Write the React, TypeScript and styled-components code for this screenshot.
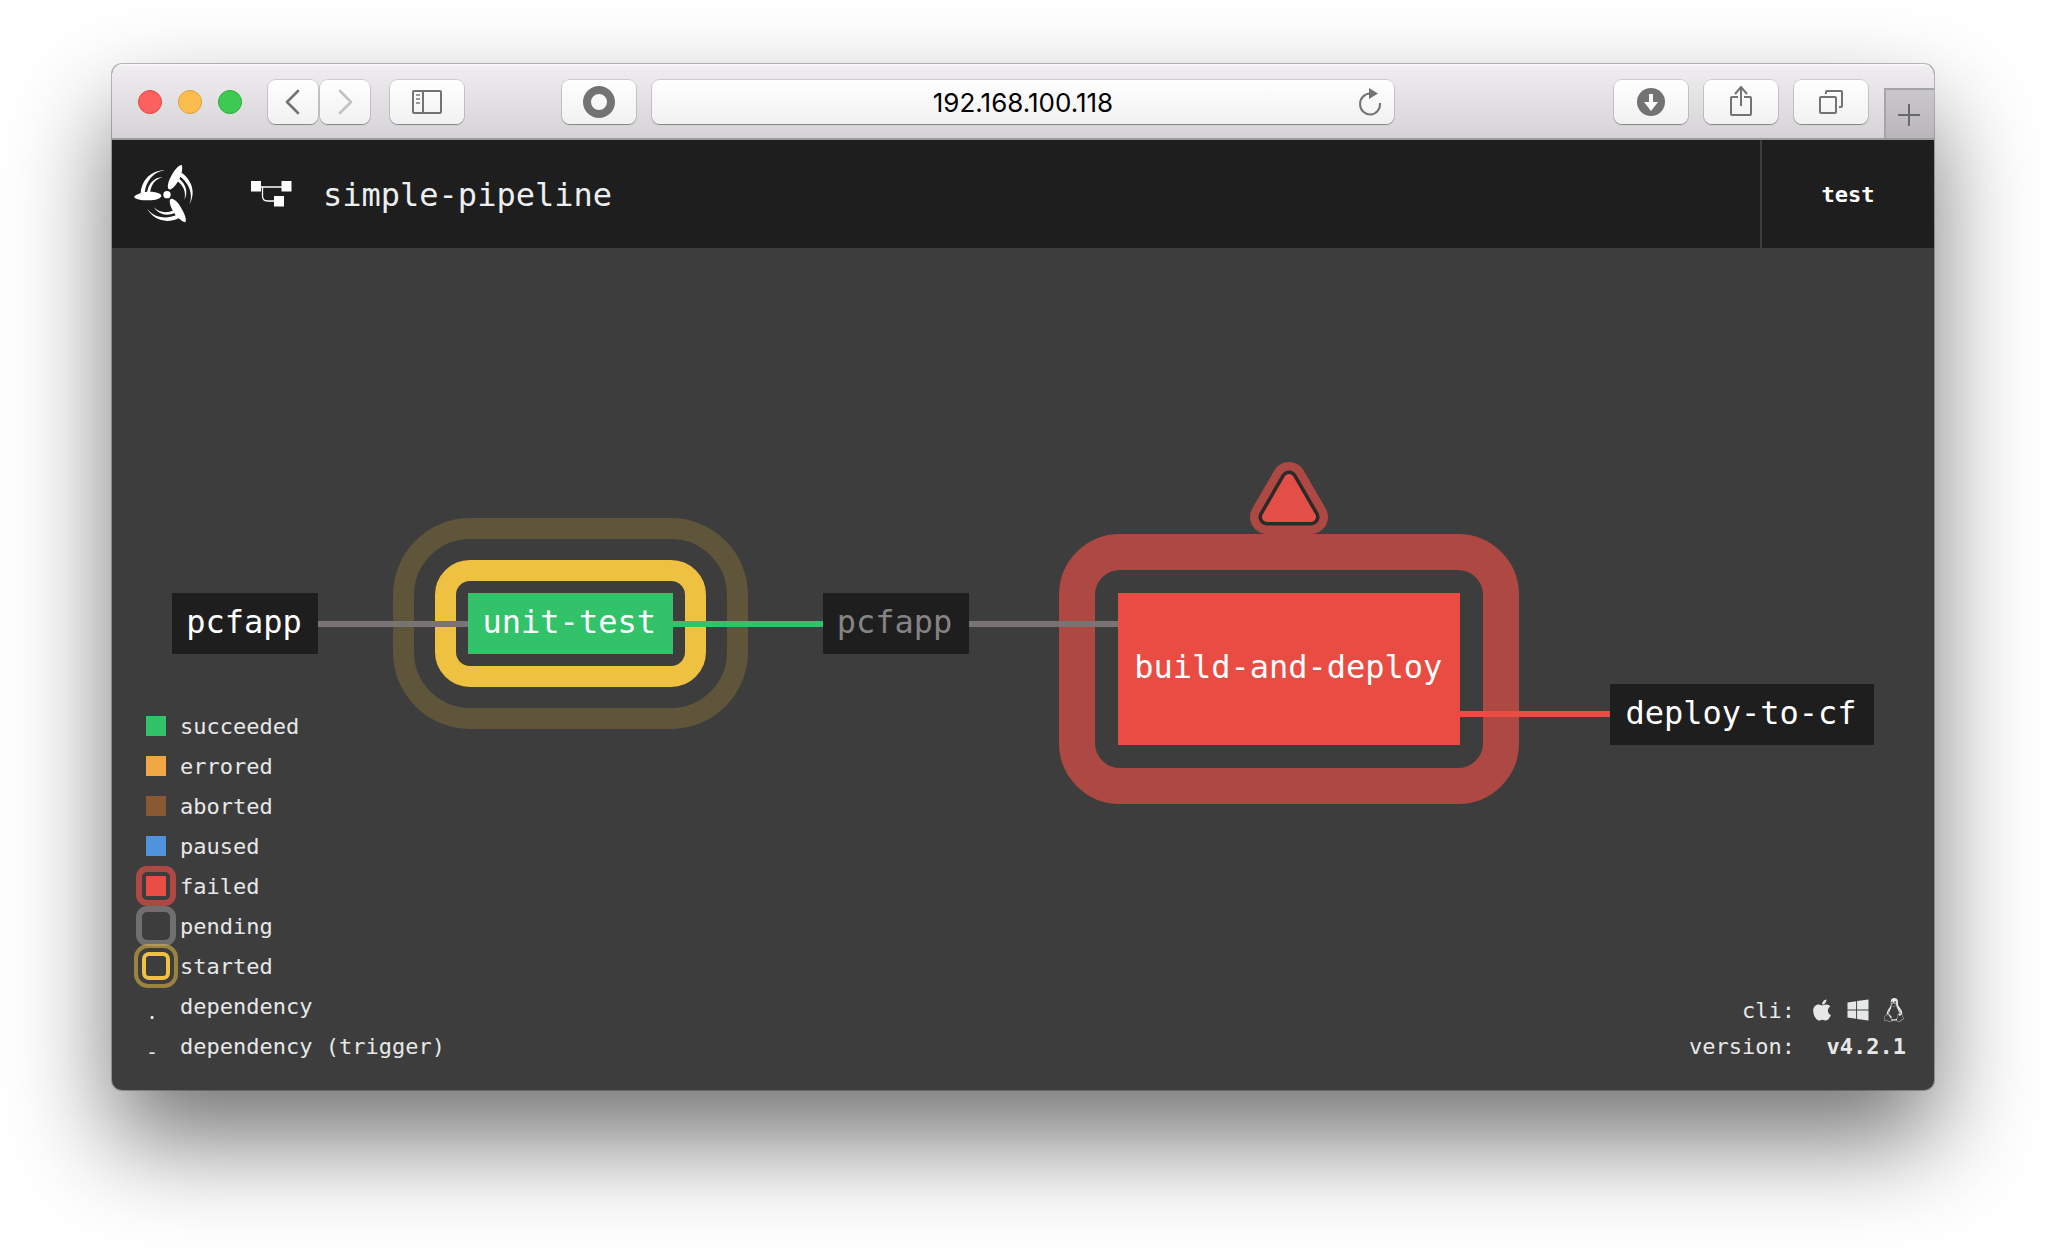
import React from "react";
import styled, { createGlobalStyle, css } from "styled-components";
import { FaApple, FaLinux, FaWindows } from "react-icons/fa";

const GlobalStyle = createGlobalStyle`
  *, *::before, *::after { box-sizing: border-box; }
  body { margin: 0; background: #fff; }
`;

const mono = `"DejaVu Sans Mono", "Liberation Mono", monospace`;

const palette = {
  dark: "#1e1e1e",
  canvas: "#3d3d3d",
  text: "#e6e8e8",
  grey: "#7a7373",
  green: "#32c26a",
  orange: "#f1a646",
  brown: "#8a5833",
  blue: "#5093dc",
  red: "#e94c42",
  redRing: "#ae4842",
  yellow: "#efc140",
  yellowRing: "#5e553a",
};

const Desktop = styled.div`
  display: flex;
  min-height: 100vh;
  padding: 64px 112px 160px;
`;

const Window = styled.div`
  display: flex;
  flex: 1;
  flex-direction: column;
  min-width: 0;
  overflow: hidden;
  border-radius: 10px;
  background: ${palette.canvas};
  box-shadow: 0 0 0 1px rgba(0, 0, 0, 0.25), 0 50px 100px rgba(0, 0, 0, 0.55);
`;

/* Browser chrome */

const Toolbar = styled.div`
  display: grid;
  grid-template-columns: minmax(0, 1fr) minmax(0, 742px) minmax(0, 1fr);
  height: 76px;
  padding-top: 2px;
  border-bottom: 2px solid #9c9b9c;
  background: linear-gradient(#f0eef1, #d5d3d6);
  box-shadow: inset 0 2px 0 #f8f7f8;
`;

const ToolbarSide = styled.div`
  display: flex;
  align-items: center;
  gap: 16px;
`;

const Lights = styled.div`
  display: flex;
  gap: 16px;
  padding: 0 10px 0 26px;
`;

const Light = styled.button<{ $fill: string; $edge: string }>`
  width: 24px;
  height: 24px;
  padding: 0;
  border: 1px solid ${(p) => p.$edge};
  border-radius: 50%;
  background: ${(p) => p.$fill};
`;

const NavPair = styled.div`
  display: flex;
  gap: 2px;
  padding-right: 4px;
`;

const raised = css`
  height: 44px;
  border: 0;
  border-radius: 8px;
  background: linear-gradient(#fff, #f1f1f1);
  box-shadow: 0 0 0 1px rgba(0, 0, 0, 0.12), 0 1px 1px rgba(0, 0, 0, 0.3);
`;

const ToolButton = styled.button<{ $narrow?: boolean }>`
  ${raised}
  display: flex;
  align-items: center;
  justify-content: center;
  width: ${(p) => (p.$narrow ? 50 : 74)}px;
  padding: 0;
  color: #737373;
`;

const Spacer = styled.div`
  flex: 1;
`;

const LeftSide = styled(ToolbarSide)`
  padding-right: 16px;
`;

const AddressBar = styled.div`
  ${raised}
  display: grid;
  grid-template-columns: 48px 1fr 48px;
  align-self: center;
  align-items: center;
`;

const AddressInput = styled.input`
  grid-column: 2;
  width: 100%;
  padding: 2px 0 0;
  border: 0;
  background: none;
  color: #000;
  font: 26px/32px Inter, "Liberation Sans", sans-serif;
  text-align: center;
`;

const ReloadButton = styled.button`
  display: flex;
  justify-content: center;
  padding: 0;
  border: 0;
  background: none;
  color: #737373;
`;

const NewTabButton = styled.button`
  display: flex;
  align-items: center;
  align-self: flex-end;
  justify-content: center;
  width: 50px;
  height: 50px;
  padding: 2px 2px 0 0;
  border: solid #a5a4a6;
  border-width: 2px 0 0 2px;
  background: linear-gradient(#c9c7ca, #b9b7ba);
  color: #69686a;
`;

/* Application header */

const Header = styled.header`
  display: flex;
  align-items: center;
  height: 108px;
  background: ${palette.dark};
  color: #eceff0;
  font: 32px/40px ${mono};
`;

const HomeLink = styled.a`
  display: flex;
  padding: 0 58px 0 22px;
  color: #fff;
`;

const PipelineLink = styled.a`
  display: flex;
  align-items: center;
  gap: 31px;
  color: inherit;
  text-decoration: none;
`;

const TeamLink = styled.a`
  display: flex;
  align-items: center;
  align-self: stretch;
  justify-content: center;
  width: 174px;
  margin-left: auto;
  border-left: 2px solid ${palette.canvas};
  color: #fff;
  font-size: 22px;
  font-weight: bold;
  text-decoration: none;
`;

const Label = styled.span`
  padding-top: 2px;
`;

/* Pipeline graph */

const Canvas = styled.main`
  display: grid;
  flex: 1;
  isolation: isolate;
`;

const Pipeline = styled.section`
  display: flex;
  grid-area: 1 / 1;
  align-items: flex-start;
  align-self: center;
  padding: 0 60px;
`;

const Connector = styled.div<{ $color: string; $second?: boolean }>`
  z-index: 1;
  flex: 1;
  height: 6px;
  margin-top: ${(p) => (p.$second ? 118 : 28)}px;
  background: ${(p) => p.$color};
`;

const Node = styled.a<{ $width: number; $fill?: string; $dim?: boolean; $tall?: boolean; $second?: boolean }>`
  position: relative;
  display: flex;
  align-items: center;
  justify-content: center;
  width: ${(p) => p.$width}px;
  height: ${(p) => (p.$tall ? 152 : 61)}px;
  margin-top: ${(p) => (p.$second ? 91 : 0)}px;
  padding: 0 2px 4px 0;
  background: ${(p) => p.$fill ?? palette.dark};
  color: ${(p) => (p.$dim ? "#868383" : "#fff")};
  font: 32px/40px ${mono};
  text-decoration: none;
  white-space: nowrap;
`;

const Ring = styled.span<{ $reach: number; $width: number; $radius: number; $color: string }>`
  position: absolute;
  z-index: -1;
  inset: ${(p) => -p.$reach}px;
  border: ${(p) => p.$width}px solid ${(p) => p.$color};
  border-radius: ${(p) => p.$radius}px;
`;

const Alert = styled.svg`
  position: absolute;
  bottom: calc(100% + 59px);
  left: calc(50% - 39px);
`;

/* Legend and build information */

const Footer = styled.footer`
  display: flex;
  grid-area: 1 / 1;
  align-items: flex-end;
  align-self: end;
  justify-content: space-between;
  padding: 0 28px 24px 34px;
  color: ${palette.text};
  font: 22px/40px ${mono};
`;

const Legend = styled.ul`
  margin: 0;
  padding: 0;
  list-style: none;
`;

const LegendItem = styled.li`
  display: flex;
  align-items: center;
  gap: 14px;
  height: 40px;
`;

const Swatch = styled.span<{ $fill?: string }>`
  position: relative;
  width: 20px;
  height: 20px;
  background: ${(p) => p.$fill ?? "transparent"};
`;

const Mark = styled.span`
  width: 20px;
  padding-top: 12px;
  font-size: 20px;
  line-height: 28px;
`;

const Info = styled.dl`
  display: grid;
  grid-template-columns: auto 93px;
  column-gap: 18px;
  margin: 0;
  padding-bottom: 1px;
  line-height: 36px;
  text-align: right;
`;

const InfoValue = styled.dd`
  display: flex;
  align-items: center;
  justify-content: flex-end;
  gap: 12px;
  margin: 0;
  font-weight: bold;
`;

const CliLink = styled.a`
  display: flex;
  padding-bottom: 2px;
  color: inherit;
`;

const propeller = [0, 120, 240];

const Logo = () => (
  <svg width="59" height="59" viewBox="42 44 177 177" fill="currentColor" aria-hidden="true">
    <circle cx="141" cy="133" r="11" />
    {propeller.map((angle) => (
      <g key={angle} transform={`rotate(${angle} 141 133)`}>
        <path d="M42 139C48 132 66 124 88 124C108 124 124 129 124 136C124 144 106 150 86 150C62 150 46 147 42 139Z" />
        <path d="M62 128C66 86 96 60 134 60C100 65 78 92 74 128Z" />
        <path d="M81 128C85 98 102 82 128 80C106 87 93 102 90 128Z" />
      </g>
    ))}
  </svg>
);

const PipelineIcon = () => (
  <svg width="41" height="26" viewBox="0 0 41 26" aria-hidden="true">
    <path d="M0 0h10v10.500H0zM30.500 0h10v10.500h-10zM23 15h10v10.500H23z" fill="#fff" />
    <path d="M10 6h21M11.500 6v9q0 5 5 5H23" fill="none" stroke="#fff" strokeWidth="1.300" />
  </svg>
);

const legend: { label: string; marker: React.ReactNode }[] = [
  { label: "succeeded", marker: <Swatch $fill={palette.green} /> },
  { label: "errored", marker: <Swatch $fill={palette.orange} /> },
  { label: "aborted", marker: <Swatch $fill={palette.brown} /> },
  { label: "paused", marker: <Swatch $fill={palette.blue} /> },
  {
    label: "failed",
    marker: (
      <Swatch $fill={palette.red}>
        <Ring $reach={10} $width={6} $radius={11} $color={palette.redRing} />
      </Swatch>
    ),
  },
  {
    label: "pending",
    marker: (
      <Swatch>
        <Ring $reach={10} $width={6} $radius={11} $color="#6f6f6f" />
      </Swatch>
    ),
  },
  {
    label: "started",
    marker: (
      <Swatch>
        <Ring $reach={4} $width={4} $radius={7} $color={palette.yellow} />
        <Ring $reach={12} $width={4} $radius={14} $color="rgba(239, 193, 64, 0.53)" />
      </Swatch>
    ),
  },
  { label: "dependency", marker: <Mark>.</Mark> },
  { label: "dependency (trigger)", marker: <Mark>-</Mark> },
];

const BrowserToolbar = () => (
  <Toolbar>
    <LeftSide>
      <Lights>
        <Light $fill="#fc605f" $edge="#e0474b" aria-label="Close" />
        <Light $fill="#fdbd4e" $edge="#dfa03c" aria-label="Minimize" />
        <Light $fill="#3dc952" $edge="#2bac3b" aria-label="Zoom" />
      </Lights>
      <NavPair>
        <ToolButton $narrow aria-label="Back">
          <svg width="16" height="26" viewBox="0 0 16 26" fill="none" stroke="currentColor" strokeWidth="2.600" strokeLinecap="round" strokeLinejoin="round">
            <path d="M13 2L2 13l11 11" />
          </svg>
        </ToolButton>
        <ToolButton $narrow aria-label="Forward">
          <svg width="16" height="26" viewBox="0 0 16 26" fill="none" stroke="#c2c2c2" strokeWidth="2.600" strokeLinecap="round" strokeLinejoin="round">
            <path d="M3 2l11 11L3 24" />
          </svg>
        </ToolButton>
      </NavPair>
      <ToolButton aria-label="Sidebar">
        <svg width="30" height="24" viewBox="0 0 30 24" fill="none" stroke="currentColor" strokeWidth="2">
          <rect x="1" y="1" width="28" height="22" rx="1" />
          <path d="M11 1v22" />
          <path d="M4 5h4M4 9h4M4 13h4" stroke="#999" />
        </svg>
      </ToolButton>
      <Spacer />
      <ToolButton aria-label="Extension">
        <svg width="32" height="32" viewBox="0 0 32 32" fill="none" stroke="currentColor" strokeWidth="8">
          <circle cx="16" cy="16" r="12" />
        </svg>
      </ToolButton>
    </LeftSide>
    <AddressBar>
      <AddressInput aria-label="Address" defaultValue="192.168.100.118" />
      <ReloadButton aria-label="Reload">
        <svg width="24" height="30" viewBox="0 0 24 30" fill="none" stroke="currentColor" strokeWidth="2">
          <path d="M12 6.500A10 10.500 0 1 0 22 16" />
          <path d="M11 1l9 5.500-9 5.500z" fill="currentColor" stroke="none" />
        </svg>
      </ReloadButton>
    </AddressBar>
    <ToolbarSide>
      <Spacer />
      <ToolButton aria-label="Downloads">
        <svg width="28" height="28" viewBox="0 0 28 28">
          <circle cx="14" cy="14" r="14" fill="currentColor" />
          <path d="M12 6h4v8h5l-7 9-7-9h5z" fill="#fafafa" />
        </svg>
      </ToolButton>
      <ToolButton aria-label="Share">
        <svg width="24" height="32" viewBox="0 0 24 32" fill="none" stroke="currentColor" strokeWidth="2">
          <path d="M9 11H3q-1 0-1 1v16q0 1 1 1h18q1 0 1-1V12q0-1-1-1h-6M12 20V2M6 8l6-7 6 7" />
        </svg>
      </ToolButton>
      <ToolButton aria-label="Tabs">
        <svg width="26" height="26" viewBox="0 0 26 26" fill="none" stroke="currentColor" strokeWidth="2">
          <rect x="2" y="8" width="16" height="16" rx="1" />
          <path d="M8 5V3q0-1 1-1h14q1 0 1 1v14q0 1-1 1h-2" />
        </svg>
      </ToolButton>
      <NewTabButton aria-label="New tab">
        <svg width="22" height="22" viewBox="0 0 22 22" stroke="currentColor" strokeWidth="2">
          <path d="M11 0v22M0 11h22" />
        </svg>
      </NewTabButton>
    </ToolbarSide>
  </Toolbar>
);

export default function App() {
  return (
    <>
      <GlobalStyle />
      <Desktop>
        <Window>
          <BrowserToolbar />
          <Header>
            <HomeLink href="#home" aria-label="Home">
              <Logo />
            </HomeLink>
            <PipelineLink href="#pipeline">
              <PipelineIcon />
              <Label>simple-pipeline</Label>
            </PipelineLink>
            <TeamLink href="#team">
              <Label>test</Label>
            </TeamLink>
          </Header>
          <Canvas>
            <Pipeline>
              <Node href="#pcfapp" $width={146}>pcfapp</Node>
              <Connector $color={palette.grey} />
              <Node href="#unit-test" $width={205} $fill={palette.green}>
                <Ring $reach={33} $width={21} $radius={35} $color={palette.yellow} />
                <Ring $reach={75} $width={21} $radius={77} $color={palette.yellowRing} />
                unit-test
              </Node>
              <Connector $color={palette.green} />
              <Node href="#pcfapp-passed" $width={146} $dim>pcfapp</Node>
              <Connector $color={palette.grey} />
              <Node href="#build-and-deploy" $width={342} $fill={palette.red} $tall>
                <Ring $reach={59} $width={36} $radius={61} $color={palette.redRing} />
                <Alert width="78" height="72" viewBox="0 0 78 72" strokeLinejoin="round" aria-hidden="true">
                  <path d="M39 17L61 55H17Z" fill={palette.redRing} stroke={palette.redRing} strokeWidth="34" />
                  <path d="M39 17L61 55H17Z" fill="#2b2929" stroke="#2b2929" strokeWidth="17" />
                  <path d="M39 17L61 55H17Z" fill="#e34f46" stroke="#e34f46" strokeWidth="10" />
                </Alert>
                build-and-deploy
              </Node>
              <Connector $color={palette.red} $second />
              <Node href="#deploy-to-cf" $width={264} $second>deploy-to-cf</Node>
            </Pipeline>
            <Footer>
              <Legend>
                {legend.map(({ label, marker }) => (
                  <LegendItem key={label}>
                    {marker}
                    <Label>{label}</Label>
                  </LegendItem>
                ))}
              </Legend>
              <Info>
                <dt>cli:</dt>
                <InfoValue>
                  <CliLink href="#macos" aria-label="macOS"><FaApple size={24} /></CliLink>
                  <CliLink href="#windows" aria-label="Windows"><FaWindows size={24} /></CliLink>
                  <CliLink href="#linux" aria-label="Linux"><FaLinux size={24} /></CliLink>
                </InfoValue>
                <dt>version:</dt>
                <InfoValue>v4.2.1</InfoValue>
              </Info>
            </Footer>
          </Canvas>
        </Window>
      </Desktop>
    </>
  );
}
